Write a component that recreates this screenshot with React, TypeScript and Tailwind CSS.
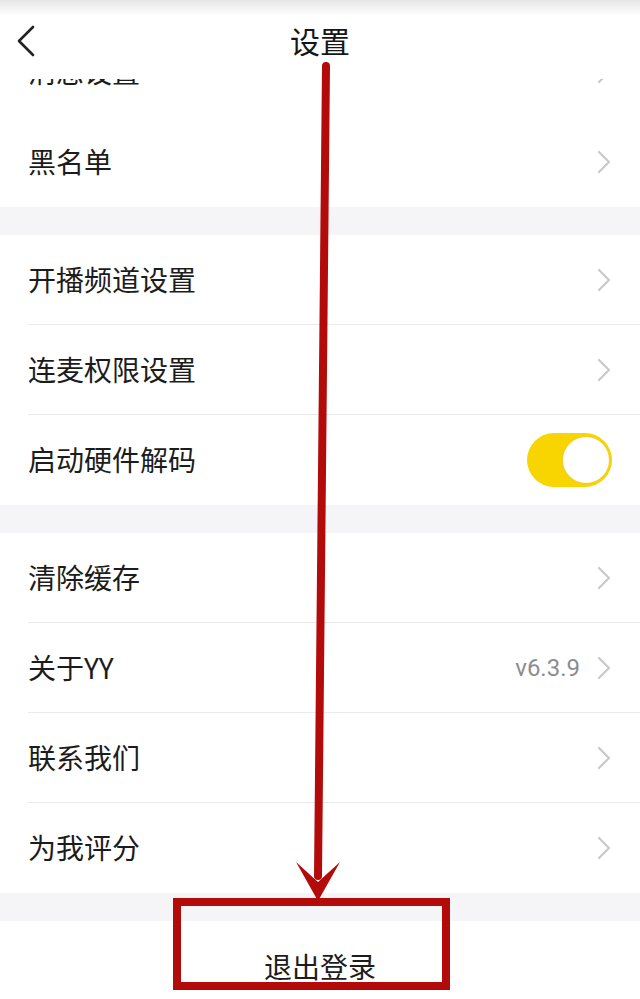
import React from 'react';

const Chevron = () => (
  <svg width="16" height="24" viewBox="0 0 16 24" fill="none" className="shrink-0">
    <path d="M3 2 L13 12 L3 22" stroke="#c9c9c9" strokeWidth="2.2" strokeLinecap="round" strokeLinejoin="round" />
  </svg>
);

const Toggle = () => (
  <div className="w-[85px] h-[54px] rounded-full bg-[#f8d400] flex items-center justify-end pr-[1px]">
    <div className="w-[50px] h-[50px] rounded-full bg-white border-2 border-[#f3d11a]" />
  </div>
);

interface RowProps {
  label: string;
  extra?: string;
  toggle?: boolean;
  divider?: boolean;
}

const Row: React.FC<RowProps> = ({ label, extra, toggle, divider }) => (
  <div className="h-[90px] shrink-0 pl-[28px] bg-white flex">
    <div className={`flex-1 flex items-center justify-between pr-[28px] ${divider ? 'border-b border-[#e9e9ec]' : ''}`}>
      <span className="text-[28px] text-[#1c1c1c] leading-none -mt-[2px]">{label}</span>
      {toggle ? (
        <Toggle />
      ) : (
        <div className="flex items-center gap-[16px]">
          {extra && <span className="text-[24px] text-[#8d8d8d] leading-none font-['Roboto',sans-serif]">{extra}</span>}
          <Chevron />
        </div>
      )}
    </div>
  </div>
);

const Gap = ({ h }: { h: string }) => <div className={`${h} bg-[#f5f5f7]`} />;

export default function App() {
  return (
    <div className="relative w-[640px] h-[999px] overflow-hidden bg-white font-['Noto_Sans_CJK_SC','Noto_Sans',sans-serif]">
      {/* header */}
      <div className="h-[79px] bg-[linear-gradient(to_bottom,#e6e6e6_0px,#ffffff_16px)] grid grid-cols-[1fr_auto_1fr] items-center pt-[8px]">
        <div className="pl-[16px] -mt-[6px]">
          <svg width="22" height="32" viewBox="0 0 22 32" fill="none">
            <path d="M17 2 L3 16 L17 30" stroke="#222" strokeWidth="2.6" strokeLinecap="round" strokeLinejoin="round" />
          </svg>
        </div>
        <h1 className="text-[30px] text-[#161616] leading-none -mt-[8px]">设置</h1>
        <div />
      </div>

      {/* scrolled-off row */}
      <div className="h-[38px] overflow-hidden flex flex-col justify-end">
        <Row label="消息设置" />
      </div>
      <Row label="黑名单" />
      <Gap h="h-[28px]" />
      <Row label="开播频道设置" divider />
      <Row label="连麦权限设置" divider />
      <Row label="启动硬件解码" toggle />
      <Gap h="h-[28px]" />
      <Row label="清除缓存" divider />
      <Row label="关于YY" extra="v6.3.9" divider />
      <Row label="联系我们" divider />
      <Row label="为我评分" />
      <Gap h="h-[28px]" />
      <div className="h-[90px] bg-white flex items-center justify-center">
        <span className="text-[28px] text-[#1c1c1c] leading-none">退出登录</span>
      </div>

      {/* red annotation */}
      <svg className="absolute inset-0 pointer-events-none" width="640" height="999" viewBox="0 0 640 999">
        <line x1="326" y1="66" x2="318" y2="876" stroke="#b30a0a" strokeWidth="8" strokeLinecap="round" />
        <polygon points="296,862 318,882 340,862 318,901" fill="#b30a0a" />
      </svg>
      <div className="absolute left-[173px] top-[898px] w-[277px] h-[92px] border-[8px] border-[#b30a0a] pointer-events-none" />
    </div>
  );
}
